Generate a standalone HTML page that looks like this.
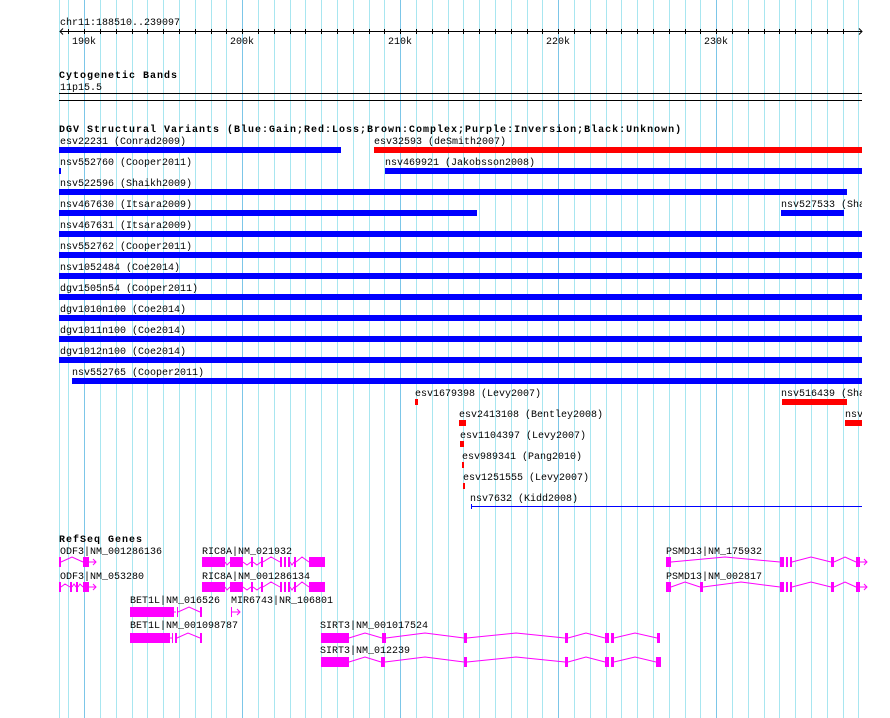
<!DOCTYPE html>
<html><head><meta charset="utf-8"><style>
html,body{margin:0;padding:0;background:#fff;}
svg{display:block;}
text{font-family:"Liberation Mono",monospace;font-size:10px;fill:#000;}
.b{font-weight:bold;letter-spacing:1px;}
</style></head><body>
<svg width="890" height="718" viewBox="0 0 890 718" xmlns="http://www.w3.org/2000/svg" shape-rendering="crispEdges">
<g id="grid">
<line x1="59.5" y1="0" x2="59.5" y2="718" stroke="#a8e6f0"/>
<g stroke="#a8e6f0">
<line x1="68.5" y1="0" x2="68.5" y2="718"/><line x1="100.5" y1="0" x2="100.5" y2="718"/><line x1="116.5" y1="0" x2="116.5" y2="718"/><line x1="132.5" y1="0" x2="132.5" y2="718"/><line x1="147.5" y1="0" x2="147.5" y2="718"/><line x1="163.5" y1="0" x2="163.5" y2="718"/><line x1="179.5" y1="0" x2="179.5" y2="718"/><line x1="195.5" y1="0" x2="195.5" y2="718"/><line x1="211.5" y1="0" x2="211.5" y2="718"/><line x1="226.5" y1="0" x2="226.5" y2="718"/>
<line x1="258.5" y1="0" x2="258.5" y2="718"/><line x1="274.5" y1="0" x2="274.5" y2="718"/><line x1="290.5" y1="0" x2="290.5" y2="718"/><line x1="305.5" y1="0" x2="305.5" y2="718"/><line x1="321.5" y1="0" x2="321.5" y2="718"/><line x1="337.5" y1="0" x2="337.5" y2="718"/><line x1="353.5" y1="0" x2="353.5" y2="718"/><line x1="369.5" y1="0" x2="369.5" y2="718"/><line x1="384.5" y1="0" x2="384.5" y2="718"/>
<line x1="416.5" y1="0" x2="416.5" y2="718"/><line x1="432.5" y1="0" x2="432.5" y2="718"/><line x1="448.5" y1="0" x2="448.5" y2="718"/><line x1="463.5" y1="0" x2="463.5" y2="718"/><line x1="479.5" y1="0" x2="479.5" y2="718"/><line x1="495.5" y1="0" x2="495.5" y2="718"/><line x1="511.5" y1="0" x2="511.5" y2="718"/><line x1="527.5" y1="0" x2="527.5" y2="718"/><line x1="542.5" y1="0" x2="542.5" y2="718"/>
<line x1="574.5" y1="0" x2="574.5" y2="718"/><line x1="590.5" y1="0" x2="590.5" y2="718"/><line x1="606.5" y1="0" x2="606.5" y2="718"/><line x1="621.5" y1="0" x2="621.5" y2="718"/><line x1="637.5" y1="0" x2="637.5" y2="718"/><line x1="653.5" y1="0" x2="653.5" y2="718"/><line x1="669.5" y1="0" x2="669.5" y2="718"/><line x1="685.5" y1="0" x2="685.5" y2="718"/><line x1="700.5" y1="0" x2="700.5" y2="718"/>
<line x1="732.5" y1="0" x2="732.5" y2="718"/><line x1="748.5" y1="0" x2="748.5" y2="718"/><line x1="764.5" y1="0" x2="764.5" y2="718"/><line x1="779.5" y1="0" x2="779.5" y2="718"/><line x1="795.5" y1="0" x2="795.5" y2="718"/><line x1="811.5" y1="0" x2="811.5" y2="718"/><line x1="827.5" y1="0" x2="827.5" y2="718"/><line x1="843.5" y1="0" x2="843.5" y2="718"/><line x1="858.5" y1="0" x2="858.5" y2="718"/>
</g>
<g stroke="#7cc6e8">
<line x1="84.5" y1="0" x2="84.5" y2="718"/><line x1="242.5" y1="0" x2="242.5" y2="718"/><line x1="400.5" y1="0" x2="400.5" y2="718"/><line x1="558.5" y1="0" x2="558.5" y2="718"/><line x1="716.5" y1="0" x2="716.5" y2="718"/>
</g>
</g>

<!-- ruler -->
<text x="60" y="25">chr11:188510..239097</text>
<line x1="60" y1="31.5" x2="862" y2="31.5" stroke="#000"/>
<path d="M63 28.5 L60 31.5 L63 34.5 M859 28.5 L862 31.5 L859 34.5" stroke="#000" fill="none" shape-rendering="auto"/>
<g stroke="#000">
<line x1="68.5" y1="29" x2="68.5" y2="34"/><line x1="84.5" y1="29" x2="84.5" y2="34"/><line x1="100.5" y1="29" x2="100.5" y2="34"/><line x1="116.5" y1="29" x2="116.5" y2="34"/><line x1="132.5" y1="29" x2="132.5" y2="34"/><line x1="147.5" y1="29" x2="147.5" y2="34"/><line x1="163.5" y1="29" x2="163.5" y2="34"/><line x1="179.5" y1="29" x2="179.5" y2="34"/><line x1="195.5" y1="29" x2="195.5" y2="34"/><line x1="211.5" y1="29" x2="211.5" y2="34"/><line x1="226.5" y1="29" x2="226.5" y2="34"/><line x1="242.5" y1="29" x2="242.5" y2="34"/><line x1="258.5" y1="29" x2="258.5" y2="34"/><line x1="274.5" y1="29" x2="274.5" y2="34"/><line x1="290.5" y1="29" x2="290.5" y2="34"/><line x1="305.5" y1="29" x2="305.5" y2="34"/><line x1="321.5" y1="29" x2="321.5" y2="34"/><line x1="337.5" y1="29" x2="337.5" y2="34"/><line x1="353.5" y1="29" x2="353.5" y2="34"/><line x1="369.5" y1="29" x2="369.5" y2="34"/><line x1="384.5" y1="29" x2="384.5" y2="34"/><line x1="400.5" y1="29" x2="400.5" y2="34"/><line x1="416.5" y1="29" x2="416.5" y2="34"/><line x1="432.5" y1="29" x2="432.5" y2="34"/><line x1="448.5" y1="29" x2="448.5" y2="34"/><line x1="463.5" y1="29" x2="463.5" y2="34"/><line x1="479.5" y1="29" x2="479.5" y2="34"/><line x1="495.5" y1="29" x2="495.5" y2="34"/><line x1="511.5" y1="29" x2="511.5" y2="34"/><line x1="527.5" y1="29" x2="527.5" y2="34"/><line x1="542.5" y1="29" x2="542.5" y2="34"/><line x1="558.5" y1="29" x2="558.5" y2="34"/><line x1="574.5" y1="29" x2="574.5" y2="34"/><line x1="590.5" y1="29" x2="590.5" y2="34"/><line x1="606.5" y1="29" x2="606.5" y2="34"/><line x1="621.5" y1="29" x2="621.5" y2="34"/><line x1="637.5" y1="29" x2="637.5" y2="34"/><line x1="653.5" y1="29" x2="653.5" y2="34"/><line x1="669.5" y1="29" x2="669.5" y2="34"/><line x1="685.5" y1="29" x2="685.5" y2="34"/><line x1="700.5" y1="29" x2="700.5" y2="34"/><line x1="716.5" y1="29" x2="716.5" y2="34"/><line x1="732.5" y1="29" x2="732.5" y2="34"/><line x1="748.5" y1="29" x2="748.5" y2="34"/><line x1="764.5" y1="29" x2="764.5" y2="34"/><line x1="779.5" y1="29" x2="779.5" y2="34"/><line x1="795.5" y1="29" x2="795.5" y2="34"/><line x1="811.5" y1="29" x2="811.5" y2="34"/><line x1="827.5" y1="29" x2="827.5" y2="34"/><line x1="843.5" y1="29" x2="843.5" y2="34"/>
</g>
<text x="72" y="44">190k</text><text x="230" y="44">200k</text><text x="388" y="44">210k</text><text x="546" y="44">220k</text><text x="704" y="44">230k</text>

<!-- cytobands -->
<text class="b" x="59" y="78">Cytogenetic Bands</text>
<text x="60" y="90">11p15.5</text>
<line x1="59" y1="93.5" x2="862" y2="93.5" stroke="#000"/>
<line x1="59" y1="100.5" x2="862" y2="100.5" stroke="#000"/>

<!-- DGV -->
<text class="b" x="59" y="132">DGV Structural Variants (Blue:Gain;Red:Loss;Brown:Complex;Purple:Inversion;Black:Unknown)</text>
<g>
<text x="60" y="144">esv22231 (Conrad2009)</text><rect x="59" y="147" width="282" height="6" fill="#0000ff"/>
<text x="374" y="144">esv32593 (deSmith2007)</text><rect x="374" y="147" width="488" height="6" fill="#ff0000"/>
<text x="60" y="165">nsv552760 (Cooper2011)</text><rect x="59" y="168" width="2" height="6" fill="#0000ff"/>
<text x="385" y="165">nsv469921 (Jakobsson2008)</text><rect x="385" y="168" width="477" height="6" fill="#0000ff"/>
<text x="60" y="186">nsv522596 (Shaikh2009)</text><rect x="59" y="189" width="788" height="6" fill="#0000ff"/>
<text x="60" y="207">nsv467630 (Itsara2009)</text><rect x="59" y="210" width="418" height="6" fill="#0000ff"/>
<text x="781" y="207">nsv527533 (Shaikh2009)</text><rect x="781" y="210" width="63" height="6" fill="#0000ff"/>
<text x="60" y="228">nsv467631 (Itsara2009)</text><rect x="59" y="231" width="803" height="6" fill="#0000ff"/>
<text x="60" y="249">nsv552762 (Cooper2011)</text><rect x="59" y="252" width="803" height="6" fill="#0000ff"/>
<text x="60" y="270">nsv1052484 (Coe2014)</text><rect x="59" y="273" width="803" height="6" fill="#0000ff"/>
<text x="60" y="291">dgv1505n54 (Cooper2011)</text><rect x="59" y="294" width="803" height="6" fill="#0000ff"/>
<text x="60" y="312">dgv1010n100 (Coe2014)</text><rect x="59" y="315" width="803" height="6" fill="#0000ff"/>
<text x="60" y="333">dgv1011n100 (Coe2014)</text><rect x="59" y="336" width="803" height="6" fill="#0000ff"/>
<text x="60" y="354">dgv1012n100 (Coe2014)</text><rect x="59" y="357" width="803" height="6" fill="#0000ff"/>
<text x="72" y="375">nsv552765 (Cooper2011)</text><rect x="72" y="378" width="790" height="6" fill="#0000ff"/>
<text x="415" y="396">esv1679398 (Levy2007)</text><rect x="415" y="399" width="3" height="6" fill="#ff0000"/>
<text x="781" y="396">nsv516439 (Shaikh2009)</text><rect x="782" y="399" width="65" height="6" fill="#ff0000"/>
<text x="459" y="417">esv2413108 (Bentley2008)</text><rect x="459" y="420" width="7" height="6" fill="#ff0000"/>
<text x="845" y="417">nsv552765</text><rect x="845" y="420" width="17" height="6" fill="#ff0000"/>
<text x="460" y="438">esv1104397 (Levy2007)</text><rect x="460" y="441" width="4" height="6" fill="#ff0000"/>
<text x="462" y="459">esv989341 (Pang2010)</text><rect x="462" y="462" width="2" height="6" fill="#ff0000"/>
<text x="463" y="480">esv1251555 (Levy2007)</text><rect x="463" y="483" width="2" height="6" fill="#ff0000"/>
<text x="470" y="501">nsv7632 (Kidd2008)</text>
<rect x="471" y="506" width="391" height="1" fill="#0000ff"/><rect x="471" y="504" width="1" height="5" fill="#0000ff"/>
</g>
<rect x="862" y="130" width="28" height="300" fill="#fff"/>

<!-- RefSeq -->
<text class="b" x="59" y="542">RefSeq Genes</text>
<g fill="#ff00ff" stroke="none">
<text x="60" y="554">ODF3|NM_001286136</text>
<text x="60" y="579">ODF3|NM_053280</text>
<text x="202" y="554">RIC8A|NM_021932</text>
<text x="202" y="579">RIC8A|NM_001286134</text>
<text x="130" y="603">BET1L|NM_016526</text>
<text x="231" y="603">MIR6743|NR_106801</text>
<text x="130" y="628">BET1L|NM_001098787</text>
<text x="320" y="628">SIRT3|NM_001017524</text>
<text x="320" y="653">SIRT3|NM_012239</text>
<text x="666" y="554">PSMD13|NM_175932</text>
<text x="666" y="579">PSMD13|NM_002817</text>
</g>
<g fill="#ff00ff">
<!-- ODF3 1 -->
<rect x="59" y="557" width="2" height="10"/><rect x="83" y="557" width="6" height="10"/>
<!-- ODF3 2 -->
<rect x="59" y="582" width="2" height="10"/><rect x="70" y="582" width="2" height="10"/><rect x="76" y="582" width="2" height="10"/><rect x="83" y="582" width="6" height="10"/>
<!-- RIC8A 1 -->
<rect x="202" y="557" width="23" height="10"/><rect x="230" y="557" width="13" height="10"/><rect x="251" y="557" width="2" height="10"/><rect x="261" y="557" width="2" height="10"/><rect x="280" y="557" width="2" height="10"/><rect x="284" y="557" width="2" height="10"/><rect x="288" y="557" width="2" height="10"/><rect x="294" y="557" width="2" height="10"/><rect x="309" y="557" width="16" height="10"/>
<!-- RIC8A 2 -->
<rect x="202" y="582" width="23" height="10"/><rect x="230" y="582" width="13" height="10"/><rect x="251" y="582" width="2" height="10"/><rect x="261" y="582" width="2" height="10"/><rect x="280" y="582" width="2" height="10"/><rect x="284" y="582" width="2" height="10"/><rect x="288" y="582" width="2" height="10"/><rect x="294" y="582" width="2" height="10"/><rect x="309" y="582" width="16" height="10"/>
<!-- BET1L -->
<rect x="130" y="607" width="44" height="10"/><rect x="177" y="607" width="1" height="10"/><rect x="200" y="607" width="2" height="10"/>
<rect x="130" y="633" width="40" height="10"/><rect x="172" y="633" width="1" height="10"/><rect x="175" y="633" width="2" height="10"/><rect x="200" y="633" width="2" height="10"/>
<rect x="231" y="607" width="1" height="10"/>
<!-- SIRT3 -->
<rect x="321" y="633" width="28" height="10"/><rect x="382" y="633" width="4" height="10"/><rect x="464" y="633" width="3" height="10"/><rect x="565" y="633" width="3" height="10"/><rect x="605" y="633" width="4" height="10"/><rect x="611" y="633" width="3" height="10"/><rect x="657" y="633" width="3" height="10"/>
<rect x="321" y="657" width="28" height="10"/><rect x="381" y="657" width="4" height="10"/><rect x="464" y="657" width="3" height="10"/><rect x="565" y="657" width="3" height="10"/><rect x="605" y="657" width="4" height="10"/><rect x="611" y="657" width="3" height="10"/><rect x="656" y="657" width="5" height="10"/>
<!-- PSMD13 -->
<rect x="666" y="557" width="5" height="10"/><rect x="780" y="557" width="4" height="10"/><rect x="786" y="557" width="2" height="10"/><rect x="790" y="557" width="2" height="10"/><rect x="831" y="557" width="3" height="10"/><rect x="856" y="557" width="4" height="10"/>
<rect x="666" y="582" width="5" height="10"/><rect x="700" y="582" width="3" height="10"/><rect x="780" y="582" width="4" height="10"/><rect x="786" y="582" width="2" height="10"/><rect x="790" y="582" width="2" height="10"/><rect x="831" y="582" width="3" height="10"/><rect x="856" y="582" width="4" height="10"/>
</g>
<g fill="none" stroke="#ff00ff" stroke-width="1" shape-rendering="auto">
<path d="M61 562 L72 557 L83 562 M89 562 L96 562 M93 559 L96 562 L93 565"/>
<path d="M61 587 L65 584 L70 587 M72 587 L74 584 L76 587 M78 587 L80 584 L83 587 M89 587 L96 587 M93 584 L96 587 L93 590"/>
<path d="M225 562 L227 565 L230 562 M243 562 L247 565 L251 562 M253 562 L257 565 L261 562 M263 562 L271 557 L280 562 M290 562 L292 565 L294 562 M296 562 L302 557 L309 562"/>
<path d="M225 587 L227 590 L230 587 M243 587 L247 590 L251 587 M253 587 L257 590 L261 587 M263 587 L271 582 L280 587 M290 587 L292 590 L294 587 M296 587 L302 582 L309 587"/>
<path d="M174 612 L176 612 M178 612 L189 607 L200 612"/>
<path d="M170 638 L172 638 M177 638 L188 633 L200 638"/>
<path d="M232 612 L240 612 M237 609 L240 612 L237 615"/>
<path d="M349 638 L365 633 L382 638 M386 638 L425 633 L464 638 M467 638 L516 633 L565 638 M568 638 L586 633 L605 638 M614 638 L635 633 L657 638"/>
<path d="M349 662 L365 657 L381 662 M385 662 L425 657 L464 662 M467 662 L516 657 L565 662 M568 662 L586 657 L605 662 M614 662 L635 657 L656 662"/>
<path d="M671 562 L725 557 L780 562 M792 562 L811 557 L831 562 M834 562 L845 557 L856 562 M860 562 L867 562 M864 559 L867 562 L864 565"/>
<path d="M671 587 L685 582 L700 587 M703 587 L741 582 L780 587 M792 587 L811 582 L831 587 M834 587 L845 582 L856 587 M860 587 L867 587 M864 584 L867 587 L864 590"/>
</g>
</svg>
</body></html>
